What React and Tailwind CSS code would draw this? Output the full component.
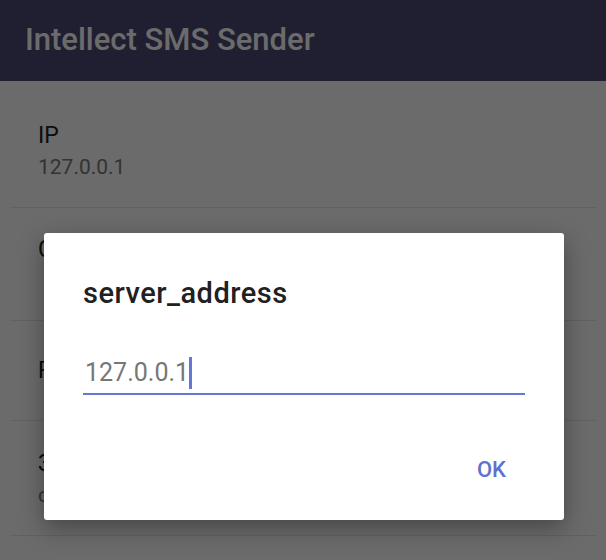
export default function App() {
  const items = [
    { title: "IP", summary: "127.0.0.1", h: "h-[116px]", pt: "pt-[30px]" },
    { title: "Сервер", summary: null, h: "h-[113px]", pt: "pt-[28px]" },
    { title: "Port", summary: null, h: "h-[100px]", pt: "pt-[36px]" },
    { title: "Задержка", summary: "с", h: "h-[115px]", pt: "pt-[29px]" },
  ];
  return (
    <div className="relative w-[606px] h-[560px] overflow-hidden bg-white font-[Roboto,'Noto_Sans',sans-serif]">
      <div className="h-[81px] bg-[#4a4a75] pl-[25px] pt-[22px]">
        <div className="text-[31px] leading-[36px] font-medium text-white">Intellect SMS Sender</div>
      </div>
      <div className="pt-[11px]">
        {items.map((it, i) => (
          <div key={i} className={`${it.h} ${it.pt} mx-[10px] px-[28px] border-b border-[#e8e8e8]`}>
            <div className="text-[23px] leading-[28px] text-[#222]">{it.title}</div>
            {it.summary && (
              <div className="mt-[4px] text-[21px] leading-[26px] text-[#7a7a7a]">{it.summary}</div>
            )}
          </div>
        ))}
      </div>
      <div className="absolute inset-0 bg-black/[0.58]" />
      <div className="absolute left-[44px] top-[233px] w-[520px] h-[287px] bg-white rounded-[3px] shadow-[0_8px_24px_rgba(0,0,0,0.35)] flex flex-col px-[39px]">
        <div className="mt-[42px] text-[29px] leading-[36px] tracking-[0.5px] font-medium text-[#212121]">server_address</div>
        <div className="mt-[46px] flex items-center h-[32px] pl-[2px]">
          <span className="text-[25px] leading-[32px] text-[#777]">127.0.0.1</span>
          <span className="w-[3px] h-[32px] bg-[#6576d4]" />
        </div>
        <div className="mt-[4px] h-[2px] bg-[#6576d4]" />
        <div className="mt-[62px] flex justify-end pr-[19px]">
          <span className="text-[22px] leading-[26px] font-medium text-[#6071cd]">OK</span>
        </div>
      </div>
    </div>
  );
}
